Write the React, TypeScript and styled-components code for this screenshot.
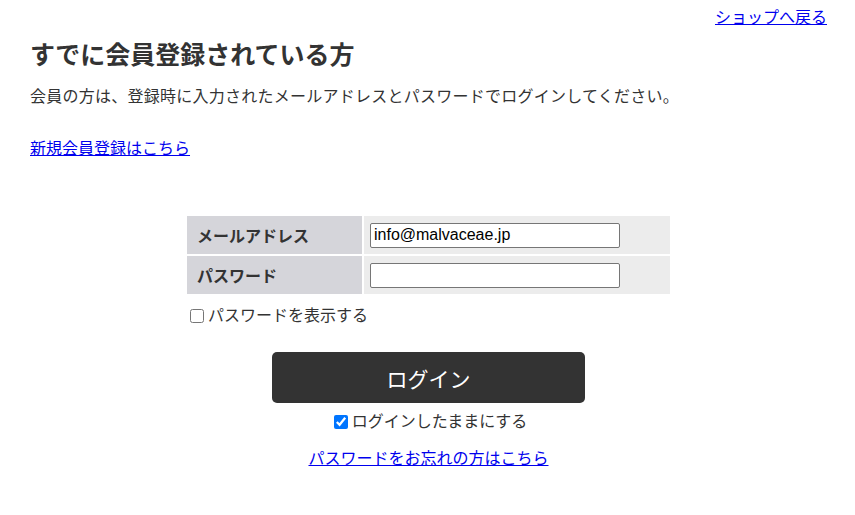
import styled, { createGlobalStyle } from 'styled-components'

const GlobalStyle = createGlobalStyle`
  body {
    margin: 0;
    background: #fff;
    color: #333;
    font-family: "Liberation Sans", "Noto Sans CJK JP", sans-serif;
    font-size: 16px;
  }
`

export default function App() {
  return (
    <>
      <GlobalStyle />
      <Page>
        <TopBar>
          <Link href="#">ショップへ戻る</Link>
        </TopBar>

        <Heading>すでに会員登録されている方</Heading>
        <Lead>会員の方は、登録時に入力されたメールアドレスとパスワードでログインしてください。</Lead>
        <RegisterLine>
          <Link href="#">新規会員登録はこちら</Link>
        </RegisterLine>

        <LoginForm onSubmit={(e) => e.preventDefault()}>
          <FieldTable>
            <tbody>
              <tr>
                <LabelCell>メールアドレス</LabelCell>
                <ValueCell>
                  <TextInput type="text" defaultValue="info@malvaceae.jp" />
                </ValueCell>
              </tr>
              <tr>
                <LabelCell>パスワード</LabelCell>
                <ValueCell>
                  <TextInput type="password" />
                </ValueCell>
              </tr>
            </tbody>
          </FieldTable>

          <CheckLine>
            <input type="checkbox" />
            パスワードを表示する
          </CheckLine>

          <LoginButton type="submit">ログイン</LoginButton>

          <CheckLine $center $top={7}>
            <input type="checkbox" defaultChecked />
            ログインしたままにする
          </CheckLine>

          <ForgotLine>
            <Link href="#">パスワードをお忘れの方はこちら</Link>
          </ForgotLine>
        </LoginForm>
      </Page>
    </>
  )
}

// styles
const Page = styled.div`
  padding: 0 28px 40px 30px;
`

const TopBar = styled.div`
  text-align: right;
  padding-top: 6px;
  line-height: 24px;
`

const Link = styled.a`
  color: #0000ee;
  text-decoration: underline;
`

const Heading = styled.h2`
  margin: 7px 0 0;
  font-size: 25px;
  line-height: 36px;
  font-weight: bold;
  color: #333;
`

const Lead = styled.p`
  margin: 12px 0 0;
  line-height: 24px;
  letter-spacing: 0.25px;
`

const RegisterLine = styled.p`
  margin: 28px 0 0;
  line-height: 24px;
`

const LoginForm = styled.form`
  width: 487px;
  margin: 53px auto 0;
  display: flex;
  flex-direction: column;
`

const FieldTable = styled.table`
  width: 100%;
  border-collapse: separate;
  border-spacing: 2px;
`

const LabelCell = styled.th`
  width: 175px;
  height: 38px;
  padding: 0 10px 1px;
  box-sizing: border-box;
  background: #d5d5da;
  text-align: left;
  font-weight: bold;
  font-size: 16px;
`

const ValueCell = styled.td`
  height: 38px;
  padding: 0 6px;
  background: #ececec;
`

const TextInput = styled.input`
  display: block;
  width: 250px;
  height: 25px;
  box-sizing: border-box;
  padding: 1px 3px;
  border: 1px solid #767676;
  border-radius: 2px;
  background: #fff;
  font-family: "Liberation Sans", sans-serif;
  font-size: 16px;
  color: #000;
`

const CheckLine = styled.label<{ $center?: boolean; $top?: number }>`
  display: flex;
  align-items: center;
  justify-content: ${(p) => (p.$center ? 'center' : 'flex-start')};
  margin-top: ${(p) => p.$top ?? 8}px;
  line-height: 24px;
  padding-left: ${(p) => (p.$center ? 0 : 1)}px;

  input {
    width: 14px;
    height: 14px;
    margin: 0 4px;
  }
`

const LoginButton = styled.button`
  align-self: center;
  width: 313px;
  height: 51px;
  margin-top: 24px;
  border: none;
  border-radius: 5px;
  background: #333;
  color: #fff;
  font-family: "Liberation Sans", "Noto Sans CJK JP", sans-serif;
  font-size: 21px;
  cursor: pointer;
`

const ForgotLine = styled.p`
  margin: 13px 0 0;
  text-align: center;
  line-height: 24px;
`
